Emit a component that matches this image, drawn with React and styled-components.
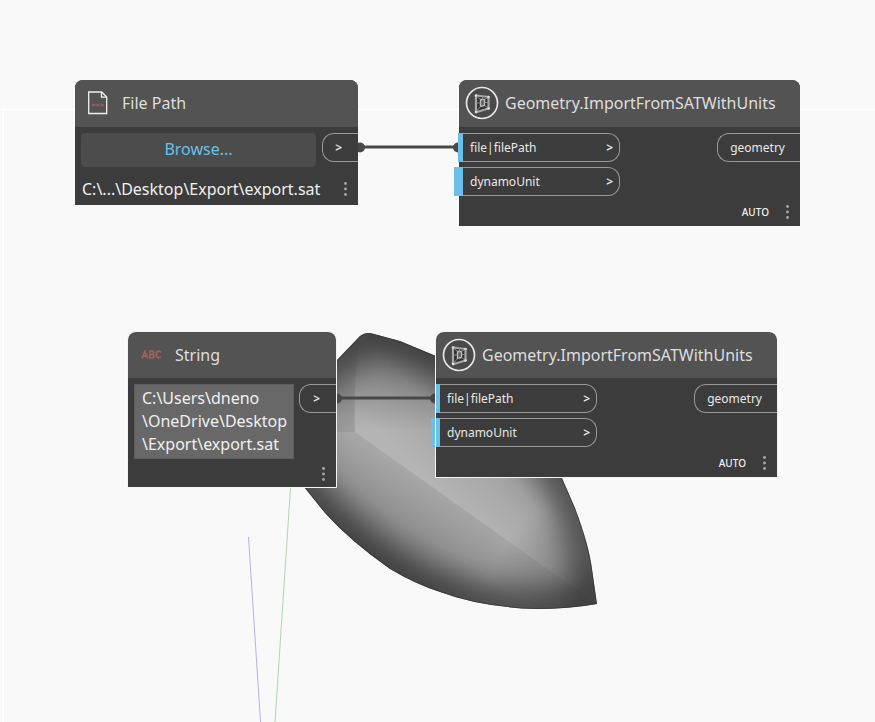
import React from 'react';
import styled, { createGlobalStyle, css } from 'styled-components';

const GlobalStyle = createGlobalStyle`
  *, *::before, *::after { box-sizing: border-box; }
  body { margin: 0; background: #f9f9f9; }
  button, textarea { font: inherit; color: inherit; border: 0; margin: 0; padding: 0; }
`;

const Workspace = styled.main`
  position: relative;
  min-height: 100vh;
  overflow: hidden;
  background: #f9f9f9;
  color: #e8e8e8;
  font-family: "Noto Sans", "Open Sans", sans-serif;
  font-size: 16px;
`;

const Scene = styled.svg`
  position: absolute;
  top: 0;
  left: 0;
  width: 100%;
  height: 100%;
  overflow: visible;
`;

/* Nodes sit freely on the graph canvas. */
const Node = styled.article`
  position: absolute;
  left: ${(p) => p.$x}px;
  top: ${(p) => p.$y}px;
  width: ${(p) => p.$w}px;
  border-radius: 8px 8px 0 0;
  background: #3c3c3c;
  ${(p) =>
    p.$outlined &&
    css`
      &::after {
        content: '';
        position: absolute;
        inset: -1px;
        border: 1px solid #f4f4f4;
        border-radius: 9px 9px 0 0;
        pointer-events: none;
      }
    `}
`;

const Header = styled.header`
  display: flex;
  align-items: center;
  gap: ${(p) => p.$gap || 6}px;
  height: ${(p) => (p.$tall ? 47 : 46)}px;
  padding: 0 0 1px ${(p) => p.$inset || 6}px;
  border-radius: 8px 8px 0 0;
  background: #535353;
`;

const Title = styled.h2`
  margin: 0;
  font-size: 16px;
  line-height: 24px;
  font-weight: 400;
  color: #dedede;
  white-space: nowrap;
`;

const Body = styled.div`
  display: flex;
  justify-content: space-between;
  align-items: flex-start;
  padding: 6px 0 0 ${(p) => p.$inset || 0}px;
`;

const Inputs = styled.div`
  display: grid;
  gap: 5px;
  width: 161px;
`;

const InputPort = styled.button`
  position: relative;
  display: flex;
  align-items: center;
  justify-content: space-between;
  height: 29px;
  padding: 0 6px 1px 11px;
  border: 1px solid #999;
  border-left: 0;
  border-radius: 0 12px 12px 0;
  background: transparent;
  font-size: 12px;
  text-align: left;

  &::before {
    content: '';
    position: absolute;
    top: -1px;
    bottom: -1px;
    left: ${(p) => (p.$unset ? -5 : -1)}px;
    width: ${(p) => (p.$unset ? 9 : 5)}px;
    background: #6ac0e7;
  }
`;

const OutputPort = styled.button`
  flex: none;
  height: 29px;
  width: ${(p) => p.$w}px;
  padding: 0 ${(p) => p.$end}px 1px 0;
  border: 1px solid #999;
  border-right: 0;
  border-radius: 12px 0 0 12px;
  background: transparent;
  font-size: 12px;
  text-align: right;
`;

const Arrow = styled.span`
  font-weight: 600;
`;

const Browse = styled.button`
  height: 34px;
  flex: 1;
  margin-right: 6px;
  padding-bottom: 2px;
  border-radius: 4px;
  background: #4c4c4c;
  color: #6ac0e7;
`;

const TextArea = styled.textarea`
  display: block;
  width: 160px;
  height: 75px;
  padding: 2px 0 2px 7px;
  border: 1px solid #5c5c5c;
  outline: 0;
  resize: none;
  overflow: hidden;
  background: #686868;
  color: #f0f0f0;
  line-height: 23px;
  white-space: pre;
`;

const Footer = styled.footer`
  display: flex;
  align-items: center;
  justify-content: ${(p) => (p.$spread ? 'space-between' : 'flex-end')};
  gap: 14px;
  height: ${(p) => p.$h}px;
  padding: ${(p) => (p.$spread ? 6 : 2)}px 8px 0 7px;
`;

const FilePath = styled.span`
  line-height: 24px;
  white-space: nowrap;
  color: #f0f0f0;
`;

const Lacing = styled.span`
  font-size: 10px;
  font-weight: 500;
  color: #f0f0f0;
`;

const MenuButton = styled.button`
  display: grid;
  width: 9px;
  height: 16px;
  place-items: center;
  background: transparent;
`;

function Menu() {
  return (
    <MenuButton aria-label="Node options">
      <svg width="4" height="16" fill="#a8a8a8" aria-hidden="true">
        <circle cx="1.5" cy="2.5" r="1.4" />
        <circle cx="1.5" cy="8" r="1.4" />
        <circle cx="1.5" cy="13.5" r="1.4" />
      </svg>
    </MenuButton>
  );
}

function FileIcon() {
  return (
    <svg width="20" height="24" fill="none" aria-hidden="true">
      <path d="M.7 1h13l5 5v16.5h-18z" stroke="#f0f0f0" strokeWidth="1.3" />
      <path d="M13.5 1v5.200h5.200" stroke="#f0f0f0" strokeWidth="1.3" />
      <path d="M4 14h12" stroke="#935c60" strokeWidth="2.4" strokeDasharray="3.3 1" />
    </svg>
  );
}

function StringIcon() {
  return (
    <svg width="21" height="10" fill="none" stroke="#a0615f" strokeWidth="1.7" aria-hidden="true">
      <path d="M1 8.5 3.800 1.200 6.700 8.5M2 6.200h3.700" />
      <path d="M9 1h2q1.700 0 1.700 1.700T11 4.500H9h2.300q1.700 0 1.700 1.700T11.300 8H9z" />
      <path d="M20 2.600q-1-1.500-2.400-1.400-2.300.2-2.300 3.400t2.300 3.300q1.400 0 2.400-1.400" />
    </svg>
  );
}

function GeometryIcon() {
  return (
    <svg width="34" height="34" fill="none" aria-hidden="true">
      <circle cx="17" cy="17" r="15.5" fill="#4a4a4a" stroke="#e6e6e6" strokeWidth="1.7" />
      <path d="M11 9.500 23.500 11v11.500L11 26.200z" fill="#303030" stroke="#a8a8a8" strokeWidth="2.200" strokeLinejoin="round" />
      <path d="M15.500 13.500h4v6l-4 1z" fill="#606060" stroke="#c2c2c2" strokeWidth="1.300" />
      <path d="m11 9.500 4.500 4M23.500 11l-4 2.500M23.500 22.500l-4-3M11 26l4.500-5.500M11 17h4.500M19.500 16.500h4M17.500 10v3.500" stroke="#8f8f8f" />
      <g fill="#e0e0e0">
        <circle cx="11" cy="9.500" r="1.300" />
        <circle cx="23.500" cy="11" r="1.300" />
        <circle cx="23.500" cy="22.500" r="1.300" />
        <circle cx="11" cy="26" r="1.300" />
      </g>
    </svg>
  );
}

function ImportNode({ x, y, tall, outlined }) {
  return (
    <Node $x={x} $y={y} $w={341} $outlined={outlined}>
      <Header $tall={tall}>
        <GeometryIcon />
        <Title>Geometry.ImportFromSATWithUnits</Title>
      </Header>
      <Body>
        <Inputs>
          <InputPort><span>file|filePath</span><Arrow>&gt;</Arrow></InputPort>
          <InputPort $unset><span>dynamoUnit</span><Arrow>&gt;</Arrow></InputPort>
        </Inputs>
        <OutputPort $w={83} $end={15}>geometry</OutputPort>
      </Body>
      <Footer $h={30}>
        <Lacing>AUTO</Lacing>
        <Menu />
      </Footer>
    </Node>
  );
}

const BODY =
  'M360 336Q366 331 374 334L400 341L436 356Q525 405 562 478L575 508Q589 545 592 569L597 604Q570 609 535 609Q480 607 440 592Q415 584 390 569Q350 541 325 513L304 487Q285 455 295 415Q306 382 337 360Z';
const LEFT_FACE =
  'M362 334Q353 370 355 432L597 604Q570 609 535 609Q480 607 440 592Q415 584 390 569Q350 541 325 513L304 487Q285 455 295 415Q306 382 337 360Z';

function Background() {
  return (
    <Scene aria-hidden="true">
      <defs>
        <clipPath id="body"><path d={BODY} /></clipPath>
        <linearGradient id="right" gradientUnits="userSpaceOnUse" x1="450" y1="500" x2="545" y2="400">
          <stop offset="0" stopColor="#b4b4b4" />
          <stop offset=".4" stopColor="#a4a4a4" />
          <stop offset="1" stopColor="#606060" />
        </linearGradient>
        <linearGradient id="left" gradientUnits="userSpaceOnUse" x1="450" y1="490" x2="388" y2="585">
          <stop offset="0" stopColor="#aaa" />
          <stop offset=".45" stopColor="#929292" />
          <stop offset="1" stopColor="#565656" />
        </linearGradient>
        <linearGradient id="top" gradientUnits="userSpaceOnUse" x1="0" y1="333" x2="0" y2="430">
          <stop offset="0" stopColor="#333" stopOpacity=".5" />
          <stop offset="1" stopColor="#333" stopOpacity="0" />
        </linearGradient>
        <radialGradient id="tip" gradientUnits="userSpaceOnUse" cx="597" cy="604" r="110">
          <stop offset="0" stopColor="#444" stopOpacity=".65" />
          <stop offset="1" stopColor="#444" stopOpacity="0" />
        </radialGradient>
        <filter id="soft" filterUnits="userSpaceOnUse" x="180" y="230" width="540" height="500" colorInterpolationFilters="sRGB">
          <feGaussianBlur stdDeviation="17" />
        </filter>
      </defs>
      <path d="M0 109.500H2000M3 109V2000" stroke="#fff" strokeWidth="2" fill="none" />
      <path d="M248.500 537 260.500 722" stroke="#b7b0e8" />
      <path d="M290.500 488 275 722" stroke="#b3d3b4" />
      <g clipPath="url(#body)">
        <path d={BODY} fill="url(#right)" />
        <path d={LEFT_FACE} fill="url(#left)" />
        <path d="M362 334Q353 370 355 432L300 432V334Z" fill="#555" fillOpacity=".12" />
        <path d={BODY} fill="url(#top)" />
        <path d={BODY} fill="url(#tip)" />
        <path d={BODY} fill="none" stroke="#1c1c1c" strokeWidth="24" strokeOpacity=".85" filter="url(#soft)" />
        <path d={BODY} fill="none" stroke="#333" strokeWidth="2" strokeOpacity=".6" />
      </g>
      <g stroke="#484848" strokeWidth="3" fill="#484848">
        <path d="M360 147H459M337 398H436" />
        <circle cx="360" cy="147.500" r="3.500" />
        <circle cx="458" cy="147.500" r="3.500" />
        <circle cx="337" cy="398.500" r="3.500" />
        <circle cx="435" cy="398.500" r="3.500" />
      </g>
    </Scene>
  );
}

export default function App() {
  return (
    <>
      <GlobalStyle />
      <Workspace>
        <Background />
        <Node $x={75} $y={80} $w={283}>
          <Header $tall $gap={14} $inset={13}>
            <FileIcon />
            <Title>File Path</Title>
          </Header>
          <Body $inset={6}>
            <Browse>Browse...</Browse>
            <OutputPort $w={36} $end={16}><Arrow>&gt;</Arrow></OutputPort>
          </Body>
          <Footer $h={38} $spread>
            <FilePath>C:\...\Desktop\Export\export.sat</FilePath>
            <Menu />
          </Footer>
        </Node>
        <ImportNode x={459} y={80} tall />
        <Node $x={128} $y={332} $w={208} $outlined>
          <Header $gap={13} $inset={13}>
            <StringIcon />
            <Title>String</Title>
          </Header>
          <Body $inset={6}>
            <TextArea
              aria-label="String value"
              spellCheck={false}
              defaultValue={'C:\\Users\\dneno\n\\OneDrive\\Desktop\n\\Export\\export.sat'}
            />
            <OutputPort $w={37} $end={16}><Arrow>&gt;</Arrow></OutputPort>
          </Body>
          <Footer $h={28}>
            <Menu />
          </Footer>
        </Node>
        <ImportNode x={436} y={332} outlined />
      </Workspace>
    </>
  );
}
